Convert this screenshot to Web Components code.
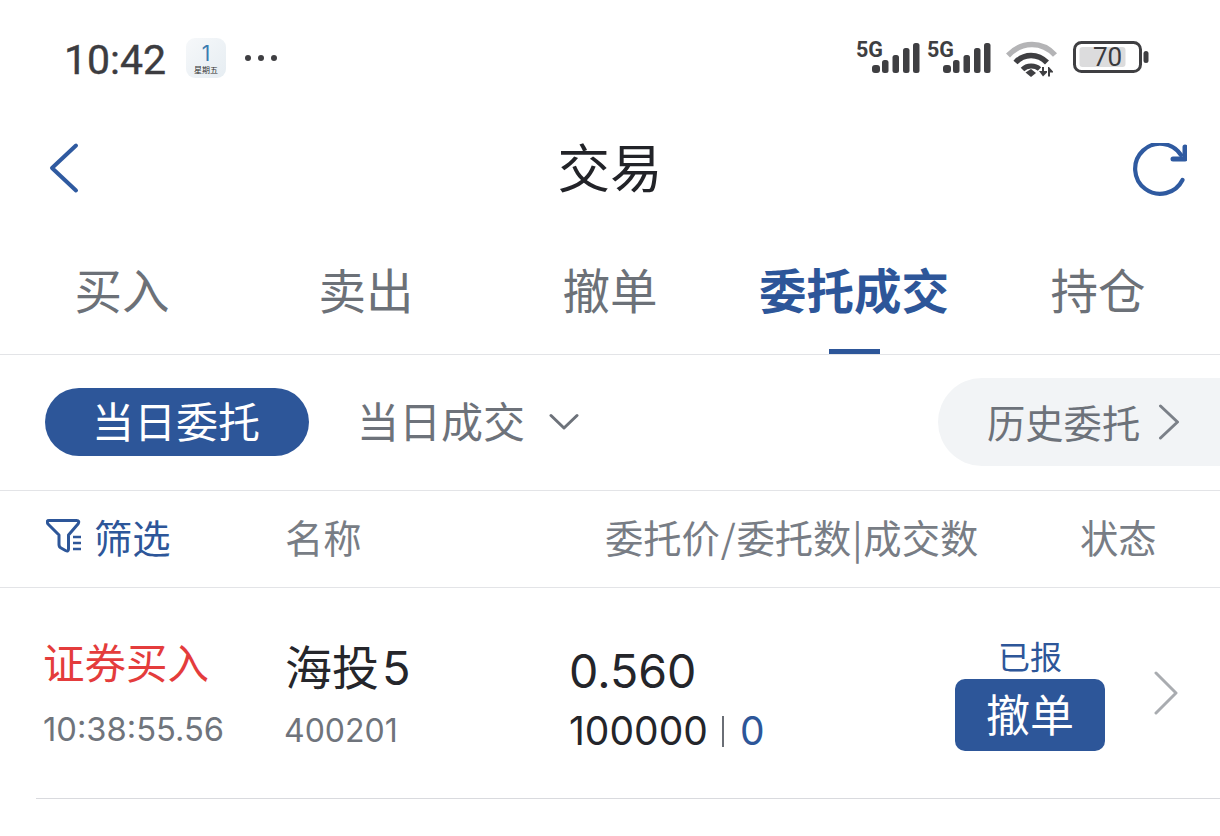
<!DOCTYPE html>
<html lang="zh-CN"><head><meta charset="utf-8">
<style>
html,body{margin:0;padding:0;background:#fff}
body{width:1220px;height:836px;overflow:hidden;font-family:"Noto Sans CJK SC","Noto Sans",sans-serif}
</style></head><body>
<status-bar></status-bar>
<nav-bar></nav-bar>
<main-tabs></main-tabs>
<sub-tabs></sub-tabs>
<list-header></list-header>
<order-row></order-row>
<script>
const CJK='"Noto Sans CJK SC","Noto Sans",sans-serif';
function def(name,html){
  customElements.define(name,class extends HTMLElement{
    constructor(){super();this.attachShadow({mode:'open'}).innerHTML=html;}
  });
}
const bars=(x)=>`<g transform="translate(${x},0)" fill="#3f3f42">
<text x="1" y="18" font-family="Roboto" font-weight="700" font-size="21.500" fill="#3f3f42">5G</text>
<rect x="17" y="26" width="8" height="8" rx="3"/><rect x="27" y="21" width="6.500" height="13" rx="2.500"/><rect x="37.500" y="16" width="6.500" height="18" rx="2.500"/><rect x="48" y="9" width="6.500" height="25" rx="2.500"/><rect x="58" y="4" width="6.500" height="30" rx="2.500"/></g>`;
def('status-bar',`<style>
:host{display:flex;box-sizing:border-box;height:115px;padding:37px 0 0 64px;align-items:flex-start;font-family:Inter,Roboto,${CJK};color:#3c3c40}
.t{font-size:41px;line-height:46px;width:122px;font-family:Roboto,${CJK};font-weight:400;-webkit-text-stroke:.4px #3c3c40}
.cal{width:40px;height:40px;box-sizing:border-box;margin-top:1px;border-radius:9px;background:linear-gradient(135deg,#f6f8fa,#e6edf2);display:flex;flex-direction:column;align-items:center;font-size:10px;line-height:10px;color:#333;padding-top:5px}
.cal b{font-weight:400;font-size:21px;line-height:21px;color:#3b7cb0}
.cal span{font-family:${CJK};font-size:8px;line-height:9px;margin-top:1px}
.dots{margin:18px 0 0 19px;display:flex;gap:7px}
.dots i{width:6px;height:6px;border-radius:50%;background:#3f3f42}
svg{margin:-4px 59px 0 auto;display:block}
</style>
<div class="t">10:42</div><div class="cal"><b>1</b><span>星期五</span></div><div class="dots"><i></i><i></i><i></i></div>
<svg width="306" height="48" viewBox="0 -6 306 48">
${bars(0)}${bars(71)}
<g transform="translate(0,-1)">
<g fill="none" stroke-linecap="butt">
<path d="M153 17.500C167 3 187 3 200 17" stroke="#b4b4b6" stroke-width="5.500"/>
<path d="M160.500 24.500C169 15 183 15 192 24.500" stroke="#3f3f42" stroke-width="5.500"/>
<path d="M167.500 31.500C172 27 180 27 184.500 31" stroke="#3f3f42" stroke-width="5"/></g>
<path d="M170.500 34.500L176 31L181 35L176 39Z" fill="#3f3f42"/>
<path d="M184 33h3v-4h2v4h3v1.500L188 38.500zM194 29l4 4.500v1h-3v4h-2V29z" fill="#3f3f42"/>
</g>
<rect x="219.500" y="3.500" width="66" height="29" rx="7" fill="none" stroke="#3f3f42" stroke-width="3"/>
<rect x="224.500" y="8" width="46" height="20" rx="3" fill="#dcdcdd"/>
<rect x="288.500" y="12" width="5" height="12" rx="2.500" fill="#3f3f42"/>
<text x="252.500" y="27" text-anchor="middle" font-family="Roboto" font-size="26" fill="#3a3a3d">70</text>
</svg>`);
def('nav-bar',`<style>
:host{display:flex;height:110px;padding:0 33px 0 49px;align-items:center;justify-content:space-between;font-family:${CJK};box-sizing:border-box}
h1{margin:0 0 10px;font-size:52.500px;line-height:60px;font-weight:400;color:#222328;position:relative;left:4px}
svg{display:block}
.b{margin-bottom:5px}
</style>
<svg class="b" width="30" height="52" viewBox="0 0 30 52"><path d="M27 3.500L3 26L27 48.500" fill="none" stroke="#2f5aa0" stroke-width="4" stroke-linecap="round" stroke-linejoin="round"/></svg>
<h1>交易</h1>
<svg width="54" height="54" viewBox="0 0 54 54"><path d="M49.500 37A25 25 0 1 1 48 12" fill="none" stroke="#2f5aa0" stroke-width="4.200" stroke-linecap="round"/><path d="M52 4V16H40" fill="none" stroke="#2f5aa0" stroke-width="5" stroke-linecap="round" stroke-linejoin="round"/></svg>`);
def('main-tabs',`<style>
:host{display:grid;grid-template-columns:repeat(5,1fr);height:130px;box-sizing:border-box;border-bottom:1px solid #e3e4e7;font-family:${CJK}}
div{display:flex;justify-content:center;padding-top:34px;font-size:47.500px;line-height:60px;color:#6c7178;position:relative}
.on{color:#2d5699;font-weight:700}
.on::after{content:"";position:absolute;left:97px;bottom:0;width:51px;height:5px;background:#2d5699}
</style><div>买入</div><div>卖出</div><div>撤单</div><div class="on">委托成交</div><div>持仓</div>`);
def('sub-tabs',`<style>
:host{display:flex;height:136px;box-sizing:border-box;border-bottom:1px solid #e3e4e7;align-items:center;padding:0 0 2px 45px;font-family:${CJK};font-size:42px;color:#6d727a}
.a{width:264px;height:68px;border-radius:34px;background:#2d5699;color:#fff;display:flex;align-items:center;justify-content:center;margin-right:48px}
.a span,.b span{position:relative;top:-2px}
.a span{left:-1px}
.b{display:flex;align-items:center;gap:24px}
.h{margin-left:auto;width:282px;height:88px;box-sizing:border-box;border-radius:44px 0 0 44px;background:#f2f4f6;display:flex;align-items:center;padding-left:49px;font-size:38.300px;gap:18px}
svg{display:block}
</style><div class="a"><span>当日委托</span></div><div class="b"><span>当日成交</span><svg width="30" height="18" viewBox="0 0 30 18"><path d="M2 2.500L15 15L28 2.500" fill="none" stroke="#6d727a" stroke-width="3" stroke-linecap="round" stroke-linejoin="round"/></svg></div>
<div class="h">历史委托<svg width="22" height="36" viewBox="0 0 22 36"><path d="M2.500 2L19.500 18L2.500 34" fill="none" stroke="#7b8088" stroke-width="3" stroke-linecap="round" stroke-linejoin="round"/></svg></div>`);
def('list-header',`<style>
:host{display:flex;height:97px;box-sizing:border-box;border-bottom:1px solid #e3e4e7;align-items:center;padding:0 0 5px 46px;font-family:${CJK};font-size:38.300px;color:#787d85}
.f{display:flex;align-items:center;gap:10px;color:#2d5699;width:239px}
.n{width:320px}
.p{width:475px;white-space:nowrap}
.p i{font-style:normal;margin:0 .8px}
svg{display:block;position:relative;top:-1px}
</style><div class="f"><svg width="38" height="36" viewBox="0 0 38 36"><path d="M3 2.500H30.500Q34 2.500 32 6L22.500 17V31Q22.500 34 19.500 32.500L15 30Q13 29 13 26.500V17L2 6Q0 2.500 3 2.500Z" fill="none" stroke="#2d5699" stroke-width="3" stroke-linejoin="round"/><path d="M27 19H35M27 25H35M27 31H35" stroke="#2d5699" stroke-width="2.500"/></svg>筛选</div><div class="n">名称</div><div class="p">委托价<i>/</i>委托数<i>|</i>成交数</div><div>状态</div>`);
def('order-row',`<style>
:host{display:flex;height:211px;box-sizing:border-box;margin-left:36px;border-bottom:1px solid #d9dade;font-family:${CJK};position:relative}
.c1{width:249px;padding:45px 0 0 7px;box-sizing:border-box}
.c2{width:285px;padding:46px 0 0 0;box-sizing:border-box}
.c3{width:385px;padding:54px 0 0 0;box-sizing:border-box}
.c4{width:150px;box-sizing:border-box;padding-top:46px;display:flex;flex-direction:column;align-items:center}
.buy{font-size:41.500px;line-height:56px;color:#e43c3c}
.time{font-family:Inter,${CJK};font-size:32.700px;line-height:46px;color:#6f747c;margin-top:17px}
.name{font-size:47px;line-height:62px;color:#25262b;white-space:nowrap}
.name span{font-family:Inter,${CJK};margin-left:3px}
.code{font-family:Inter,${CJK};font-size:32px;line-height:46px;color:#6f747c;margin-top:9px;margin-left:-1px}
.price{font-family:Inter,${CJK};font-size:46.500px;line-height:58px;color:#24252a;margin-left:-1px}
.qty{font-family:Inter,${CJK};font-size:39px;line-height:52px;color:#24252a;margin-top:5px;white-space:nowrap;margin-left:-1px;display:flex;align-items:center}
.qty em{font-style:normal;color:#2d5699}
.qty u{display:block;width:2px;height:31px;background:#6a6e75;margin:0 16px 0 14px}
.st{font-size:32px;line-height:44px;color:#2d5699;margin-top:-1px}
.btn{width:150px;height:72px;margin-top:2px;border-radius:10px;background:#2d5699;color:#fff;font-size:44px;display:flex;align-items:center;justify-content:center}
.btn span{position:relative;top:-2px}
svg{display:block;margin:83px 0 0 49px}
</style>
<div class="c1"><div class="buy">证券买入</div><div class="time">10:38:55.56</div></div>
<div class="c2"><div class="name">海投<span>5</span></div><div class="code">400201</div></div>
<div class="c3"><div class="price">0.560</div><div class="qty">100000<u></u><em>0</em></div></div>
<div class="c4"><div class="st">已报</div><div class="btn"><span>撤单</span></div></div>
<svg width="24" height="44" viewBox="0 0 24 44"><path d="M2 2L22 22L2 42" fill="none" stroke="#a9acb0" stroke-width="3" stroke-linecap="round" stroke-linejoin="round"/></svg>`);
</script>
</body></html>
